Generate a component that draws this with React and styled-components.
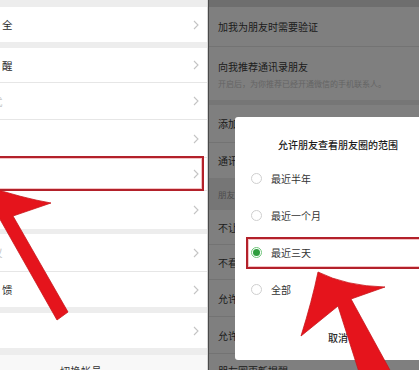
import React from "react";
import styled, { createGlobalStyle } from "styled-components";

const GlobalStyle = createGlobalStyle`
  html, body {
    margin: 0;
    padding: 0;
    width: 419px;
    height: 370px;
    overflow: hidden;
    background: #ffffff;
    font-family: "Noto Sans CJK SC", "Noto Sans", sans-serif;
  }
`;

const Page = styled.div`
  position: relative;
  display: flex;
  width: 419px;
  height: 370px;
  overflow: hidden;
`;

/* ---------- left screenshot ---------- */

const LeftPanel = styled.div`
  width: 207px;
  flex-shrink: 0;
  display: flex;
  flex-direction: column;
  background: #ededed;
  border-right: 1px solid #d6d6d6;
  overflow: hidden;
`;

const Divider = styled.div`
  width: 1px;
  flex-shrink: 0;
  background: #4a4a4a;
`;

const Gap = styled.div`
  height: ${(p) => p.$h}px;
  flex-shrink: 0;
  background: ${(p) => p.$bg || "#ededed"};
`;

const Line = styled.div`
  height: 1px;
  flex-shrink: 0;
  background: #ffffff;
  &::after {
    content: "";
    display: block;
    height: 1px;
    background: #e6e6e6;
  }
`;

const Cell = styled.div`
  position: relative;
  height: ${(p) => p.$h}px;
  flex-shrink: 0;
  display: flex;
  align-items: center;
  justify-content: space-between;
  padding: 0 8px 0 2px;
  background: #ffffff;
  font-size: 10.5px;
  color: #2b2b2b;

  ${(p) =>
    p.$marked &&
    `
    &::after {
      content: "";
      position: absolute;
      left: -4px;
      right: 3px;
      top: -2px;
      bottom: -1px;
      border: 2px solid #b3212a;
      box-shadow: inset 0 0 0 1px #f4c2c4;
    }
  `}
`;

const CellText = styled.span`
  margin-left: ${(p) => p.$shift || 0}px;
  color: ${(p) => (p.$faint ? "#c4c4c4" : "#2b2b2b")};
  white-space: nowrap;
`;

const Footer = styled.div`
  flex: 1;
  background: #f8f8f8;
  padding: 8px 0 0 60px;
  font-size: 10px;
  color: #333;
  letter-spacing: 0.5px;
`;

const Chevron = () => (
  <svg width="6" height="10" viewBox="0 0 6 10">
    <polyline points="1,1 5,5 1,9" fill="none" stroke="#c4c4c4" strokeWidth="1.1" />
  </svg>
);

/* ---------- right screenshot ---------- */

const RightPanel = styled.div`
  position: relative;
  flex: 1;
  display: flex;
  flex-direction: column;
  background: #ededed;
  overflow: hidden;
`;

const SetRow = styled.div`
  height: ${(p) => p.$h}px;
  flex-shrink: 0;
  display: flex;
  flex-direction: column;
  justify-content: center;
  gap: 4px;
  padding-left: 9px;
  background: #ffffff;
  font-size: 10px;
  color: #3a3a3a;
  white-space: nowrap;
`;

const SubText = styled.div`
  font-size: 8px;
  color: #c9c9c9;
`;

const SectionTitle = styled.div`
  height: ${(p) => p.$h}px;
  flex-shrink: 0;
  display: flex;
  align-items: center;
  padding-left: 9px;
  font-size: 8.5px;
  color: #9a9a9a;
`;

const Scrim = styled.div`
  position: absolute;
  inset: 0;
  background: rgba(0, 0, 0, 0.5);
`;

const Dialog = styled.div`
  position: absolute;
  left: 26px;
  top: 117px;
  width: 206px;
  height: 243px;
  box-sizing: border-box;
  background: #ffffff;
  border-radius: 3px;
  display: flex;
  flex-direction: column;
  padding-top: 20px;
`;

const DialogTitle = styled.div`
  height: 16px;
  line-height: 16px;
  text-align: center;
  font-size: 10px;
  font-weight: 500;
  color: #1c1c1c;
  margin-bottom: 7px;
`;

const Option = styled.div`
  position: relative;
  height: 37px;
  display: flex;
  align-items: center;
  gap: 9px;
  padding-left: 16px;
  font-size: 10px;
  color: #333;

  ${(p) =>
    p.$marked &&
    `
    &::after {
      content: "";
      position: absolute;
      left: 11px;
      right: -40px;
      top: 3px;
      bottom: 2px;
      border: 2px solid #b3212a;
      box-shadow: inset 0 0 0 1px #f4c2c4;
    }
  `}
`;

const Radio = styled.span`
  width: 11px;
  height: 11px;
  box-sizing: border-box;
  border-radius: 50%;
  border: 1px solid ${(p) => (p.$on ? "#6fc57a" : "#cfcfcf")};
  display: flex;
  align-items: center;
  justify-content: center;

  &::after {
    content: "";
    width: 7px;
    height: 7px;
    border-radius: 50%;
    background: ${(p) => (p.$on ? "#2e9e3e" : "transparent")};
  }
`;

const Cancel = styled.div`
  margin-top: auto;
  height: 30px;
  text-align: center;
  font-size: 10px;
  font-weight: 500;
  color: #2a2a2a;
`;

/* ---------- annotation arrows ---------- */

const Marks = styled.svg`
  position: absolute;
  left: 0;
  top: 0;
  pointer-events: none;
`;

const leftRows = [
  { h: 35, text: "全", gapBefore: 7 },
  { h: 34, text: "醒", gapBefore: 6 },
  { h: 36, text: "式", shift: -10, faint: true, line: true },
  { h: 37, text: "", line: true },
  { h: 32, text: "", line: true, marked: true },
  { h: 38, text: "", line: true },
  { h: 37, text: "议", shift: -10, faint: true, gapBefore: 5 },
  { h: 35, text: "馈", line: true },
  { h: 35, text: "", gapBefore: 6 },
];

const options = ["最近半年", "最近一个月", "最近三天", "全部"];

export default function App() {
  return (
    <>
      <GlobalStyle />
      <Page>
        <LeftPanel>
          {leftRows.map((r, i) => (
            <React.Fragment key={i}>
              {r.gapBefore && <Gap $h={r.gapBefore} />}
              {r.line && <Line />}
              <Cell $h={r.h} $marked={r.marked}>
                <CellText $shift={r.shift} $faint={r.faint}>{r.text}</CellText>
                <Chevron />
              </Cell>
            </React.Fragment>
          ))}
          <Gap $h={7} />
          <Footer>切换帐号</Footer>
        </LeftPanel>
        <Divider />
        <RightPanel>
          <Gap $h={7} $bg="#dcdcdc" />
          <SetRow $h={39}>加我为朋友时需要验证</SetRow>
          <Line />
          <SetRow $h={53}>
            向我推荐通讯录朋友
            <SubText>开启后，为你推荐已经开通微信的手机联系人。</SubText>
          </SetRow>
          <Gap $h={5} />
          <SetRow $h={37}>添加我的方式</SetRow>
          <Line />
          <SetRow $h={35}>通讯录黑名单</SetRow>
          <SectionTitle $h={32}>朋友圈</SectionTitle>
          <SetRow $h={34}>不让他（她）看我的朋友圈</SetRow>
          <Line />
          <SetRow $h={34}>不看他（她）的朋友圈</SetRow>
          <Line />
          <SetRow $h={36}>允许朋友查看朋友圈的范围</SetRow>
          <Line />
          <SetRow $h={36}>允许陌生人查看十条朋友圈</SetRow>
          <Line />
          <SetRow $h={33}>朋友圈更新提醒</SetRow>
          <Scrim />
          <Dialog>
            <DialogTitle>允许朋友查看朋友圈的范围</DialogTitle>
            {options.map((o) => (
              <Option key={o} $marked={o === "最近三天"}>
                <Radio $on={o === "最近三天"} />
                {o}
              </Option>
            ))}
            <Cancel>取消</Cancel>
          </Dialog>
        </RightPanel>
        <Marks width="419" height="370" viewBox="0 0 419 370">
          <path
            d="M -14 186 Q 22 198 51 203 L 13 216 L 68 312 L 57 320 L -3 214 L -30 240 Z"
            fill="#e5141c"
            stroke="#c8161c"
            strokeWidth="0.8"
          />
          <path
            d="M 318 272 Q 346 286 385 287 L 351 299 L 391 372 L 359 372 L 338 306 L 301 336 Q 312 301 318 272 Z"
            fill="#e5141c"
            stroke="#c8161c"
            strokeWidth="0.8"
          />
        </Marks>
      </Page>
    </>
  );
}
